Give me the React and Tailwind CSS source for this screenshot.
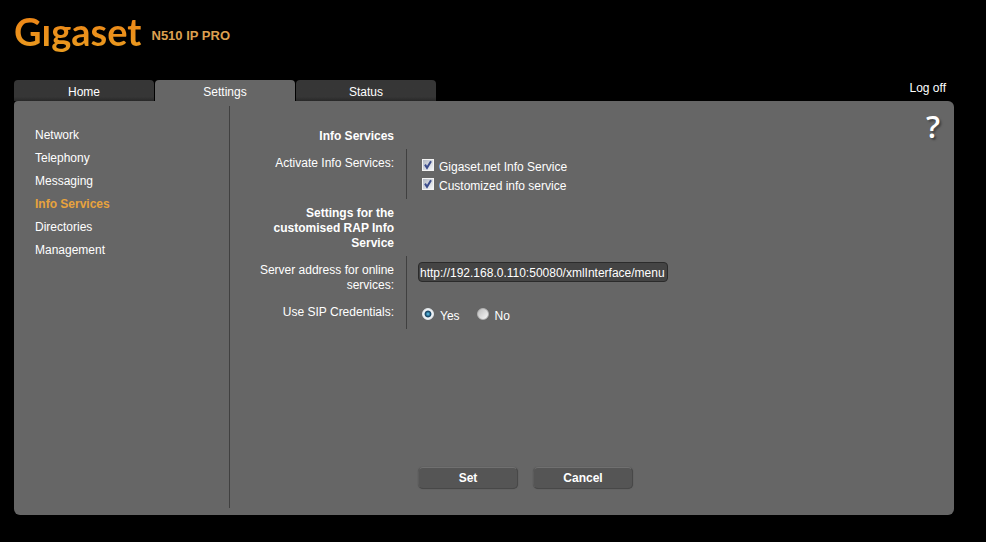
const TABS = ['Home', 'Settings', 'Status'];

const MENU = ['Network', 'Telephony', 'Messaging', 'Info Services', 'Directories', 'Management'];

export default function App() {
  return (
    <div className="min-h-screen bg-black pl-3.5 pr-8 pb-6 font-['Liberation_Sans',Arial,sans-serif] text-xs text-white">

      {/* Header */}
      <header className="flex h-20 items-start">
        <h1 className="flex items-start gap-2.5">
          <span className="bg-linear-to-b from-[#f07c12] to-[#e6a022] bg-clip-text font-['Lato',sans-serif] text-[38px] leading-[62px] font-bold text-transparent">
            Gıgaset
          </span>
          <span className="text-[13px] leading-[72px] font-bold text-[#dda050]">N510 IP PRO</span>
        </h1>
      </header>

      <div className="flex items-start justify-between">
        <nav className="flex gap-px">
          {TABS.map(tab => (
            <Tab key={tab} label={tab} active={tab === 'Settings'} />
          ))}
        </nav>
        <a href="#logoff" className="pr-2 leading-4">Log off</a>
      </div>

      <div className="flex rounded-md rounded-tl-sm bg-[#666] pt-[5px] pb-[7px]">
        <nav className="w-[216px] shrink-0 border-r border-[#404040] pt-[18px] pl-[21px]">
          <ul>
            {MENU.map(item => (
              <li key={item} className="leading-[23px]">
                <a href="#menu" className={item === 'Info Services' ? 'font-bold text-[#e8a33d]' : ''}>
                  {item}
                </a>
              </li>
            ))}
          </ul>
        </nav>

        <main className="flex min-h-[402px] flex-1 justify-between pl-6">
          <form className="flex flex-col pt-4 pb-[19px] leading-[15px]" onSubmit={e => e.preventDefault()}>
            <Heading>Info Services</Heading>

            <Row label="Activate Info Services:">
              <div className="flex flex-col gap-[3px] pt-1 pl-[15px]">
                <Checkbox id="gigaset" label="Gigaset.net Info Service" />
                <Checkbox id="customized" label="Customized info service" />
              </div>
            </Row>

            <Heading>Settings for the customised RAP Info Service</Heading>

            <Row label="Server address for online services:" htmlFor="server">
              <input
                id="server"
                type="text"
                defaultValue="http://192.168.0.110:50080/xmlInterface/menu"
                className="ml-[11px] h-5 w-[250px] rounded border border-[#2b2b2b] bg-[#444] px-px pt-0.5 outline-none"
              />
            </Row>

            <Row label="Use SIP Credentials:">
              <div className="flex gap-[17px] pt-1 pl-[15px]">
                <Radio id="yes" label="Yes" defaultChecked />
                <Radio id="no" label="No" />
              </div>
            </Row>

            <div className="mt-auto flex gap-[15px] pl-[164px]">
              <Button>Set</Button>
              <Button>Cancel</Button>
            </div>
          </form>

          <a
            href="#help"
            aria-label="Help"
            className="pr-3.5 font-['Open_Sans',sans-serif] text-[31px] leading-10 font-semibold text-shadow-[2px_2px_2px_#444]"
          >
            ?
          </a>
        </main>
      </div>
    </div>
  );
}

function Tab({ label, active }) {
  return (
    <a
      href="#tab"
      className={`h-[21px] w-[140px] rounded-t pt-0.5 text-center leading-[21px] ${
        active ? 'bg-[#666]' : 'bg-linear-to-b from-[#363636] from-80% to-[#282828]'
      }`}
    >
      {label}
    </a>
  );
}

function Heading({ children }) {
  return <h2 className="w-[140px] pt-[7px] pb-[5px] text-right font-bold">{children}</h2>;
}

function Row({ label, htmlFor, children }) {
  return (
    <div className="flex">
      <label htmlFor={htmlFor} className="w-[153px] border-r border-[#404040] pt-[7px] pr-3 pb-[5px] text-right">
        {label}
      </label>
      <div className="pt-1.5 pb-[5px]">{children}</div>
    </div>
  );
}

function Checkbox({ id, label }) {
  return (
    <div className="flex items-start gap-[5px]">
      <span className="relative">
        <input
          id={id}
          type="checkbox"
          defaultChecked
          className="peer block size-3 appearance-none border border-[#f4f4f4] bg-linear-to-br from-[#b3b9c4] to-[#f4f6f9]"
        />
        <svg viewBox="0 0 12 12" className="pointer-events-none absolute inset-0 hidden size-3 peer-checked:block">
          <path d="M3 5.6 L5 8.8 L9 2.2" fill="none" stroke="#3b4c8c" strokeWidth="2" />
        </svg>
      </span>
      <label htmlFor={id} className="pt-px">{label}</label>
    </div>
  );
}

function Radio({ id, label, defaultChecked }) {
  return (
    <div className="flex items-start gap-1.5">
      <input
        id={id}
        type="radio"
        name="sip"
        defaultChecked={defaultChecked}
        className="size-3 appearance-none rounded-full border border-[#b4b4b4] bg-linear-to-br from-[#bdbdbd] to-[#f8f8f8] checked:border-[#e4eaee] checked:bg-radial checked:from-[#5bbce4] checked:from-5% checked:via-[#12405f] checked:via-40% checked:to-[#eef2f5] checked:to-55%"
      />
      <label htmlFor={id} className="pt-px">{label}</label>
    </div>
  );
}

function Button({ children }) {
  return (
    <button className="h-[22px] w-[100px] rounded-[5px] border border-t-[#707070] border-r-[#484848] border-b-[#484848] border-l-[#5c5c5c] bg-[#555] font-bold shadow-[0_0_1px_#444]">
      {children}
    </button>
  );
}
